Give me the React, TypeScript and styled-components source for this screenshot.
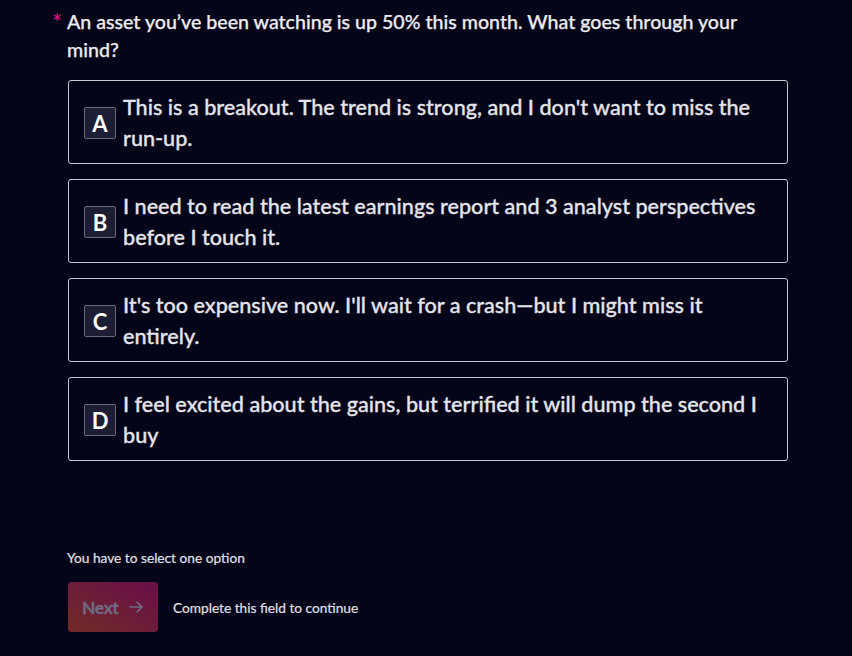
import React from 'react';
import styled, { createGlobalStyle } from 'styled-components';

const GlobalStyle = createGlobalStyle`
    html, body {
        margin: 0;
        padding: 0;
        background: #05051a;
    }
    body {
        font-family: Lato, "Liberation Sans", sans-serif;
        color: #e6e6ec;
    }
`;

interface Choice {
    key: string;
    text: string;
}

const choices: Choice[] = [
    { key: 'A', text: "This is a breakout. The trend is strong, and I don't want to miss the run-up." },
    { key: 'B', text: 'I need to read the latest earnings report and 3 analyst perspectives before I touch it.' },
    { key: 'C', text: "It's too expensive now. I'll wait for a crash\u2014but I might miss it entirely." },
    { key: 'D', text: 'I feel excited about the gains, but terrified it will dump the second I buy' },
];

const Page = styled.div`
    width: 852px;
    height: 656px;
    box-sizing: border-box;
    padding: 8px 64px 0 68px;
    display: flex;
    flex-direction: column;
`;

const Question = styled.div`
    position: relative;
    font-size: 19.6px;
    line-height: 28px;
    font-weight: 500;
    color: #ececf0;
    margin-left: -1px;
    -webkit-text-stroke: 0.25px #ececf0;
`;

const Required = styled.span`
    position: absolute;
    left: -15px;
    top: 3px;
    font-size: 24px;
    line-height: 24px;
    color: #d8157e;
    -webkit-text-stroke: 0;
`;

const ChoiceList = styled.div`
    display: flex;
    flex-direction: column;
    gap: 15px;
    margin-top: 16px;
`;

const ChoiceCard = styled.div`
    display: flex;
    align-items: center;
    gap: 7px;
    min-height: 84px;
    box-sizing: border-box;
    padding: 11px 16px 9px 15px;
    border: 1px solid #c9c9d0;
    border-radius: 3px;
    cursor: pointer;
`;

const KeyBox = styled.span`
    flex: 0 0 auto;
    width: 32px;
    height: 32px;
    box-sizing: border-box;
    display: flex;
    align-items: center;
    justify-content: center;
    background: #1d1d33;
    border: 1px solid #6a6a7c;
    border-radius: 2px;
    color: #ffffff;
    font-weight: 700;
    font-size: 22px;
`;

const ChoiceText = styled.span`
    font-size: 21.6px;
    line-height: 31px;
    font-weight: 500;
    color: #e4e4ea;
    -webkit-text-stroke: 0.3px #e4e4ea;
`;

const Footer = styled.div`
    margin-top: auto;
    padding-bottom: 24px;
    display: flex;
    flex-direction: column;
    gap: 16px;
`;

const Hint = styled.div`
    font-size: 13.7px;
    color: #e0e0e6;
    margin-left: -1px;
    -webkit-text-stroke: 0.2px #e0e0e6;
`;

const Actions = styled.div`
    display: flex;
    align-items: center;
    gap: 15px;
`;

const NextButton = styled.button`
    width: 90px;
    height: 50px;
    border: none;
    border-radius: 4px;
    background: linear-gradient(30deg, #712b26 0%, #6c1b3a 55%, #6a0e4a 100%);
    color: #6f6a82;
    font-family: Lato, "Liberation Sans", sans-serif;
    font-weight: 700;
    font-size: 17.5px;
    letter-spacing: -0.4px;
    padding: 0 0 0 14px;
    display: flex;
    align-items: center;
    justify-content: flex-start;
    gap: 11px;
    cursor: not-allowed;
    -webkit-text-stroke: 0.3px #6f6a82;
`;

const ButtonNote = styled.span`
    font-size: 13.7px;
    color: #e0e0e6;
    -webkit-text-stroke: 0.2px #e0e0e6;
`;

export default function App() {
    return (
        <>
            <GlobalStyle />
            <Page>
                <Question>
                    <Required>*</Required>
                    An asset you’ve been watching is up 50% this month. What goes through your mind?
                </Question>
                <ChoiceList>
                    {choices.map((c) => (
                        <ChoiceCard key={c.key}>
                            <KeyBox>{c.key}</KeyBox>
                            <ChoiceText>{c.text}</ChoiceText>
                        </ChoiceCard>
                    ))}
                </ChoiceList>
                <Footer>
                    <Hint>You have to select one option</Hint>
                    <Actions>
                        <NextButton disabled>
                            Next
                            <svg width="14" height="12" viewBox="0 0 14 12" fill="none" stroke="currentColor" strokeWidth="1.6" strokeLinecap="round" strokeLinejoin="round">
                                <path d="M1 6h12M8 1l5 5-5 5" />
                            </svg>
                        </NextButton>
                        <ButtonNote>Complete this field to continue</ButtonNote>
                    </Actions>
                </Footer>
            </Page>
        </>
    );
}
